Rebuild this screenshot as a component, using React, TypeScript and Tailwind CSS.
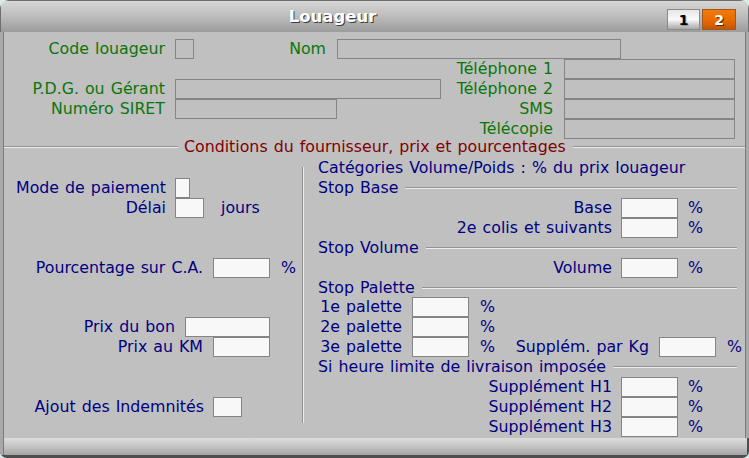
import type { ReactNode } from "react";

function Label({ className, children }: { className: string; children: ReactNode }) {
  return (
    <div className={`shrink-0 whitespace-nowrap text-right leading-none ${className}`}>
      {children}
    </div>
  );
}

function Field({ className }: { className: string }) {
  return <div className={`h-[20px] shrink-0 border border-[#858585] ${className}`} />;
}

function Input({ className }: { className: string }) {
  return <div className={`h-[20px] shrink-0 border border-[#858585] bg-[#f8f8f8] ${className}`} />;
}

function Row({ children, className = "" }: { children?: ReactNode; className?: string }) {
  return <div className={`flex h-[20px] items-center ${className}`}>{children}</div>;
}

function Heading({ children, className = "h-[20px]" }: { children: ReactNode; className?: string }) {
  return (
    <div className={`flex items-center pl-[14px] pr-[12px] ${className}`}>
      <span className="whitespace-nowrap leading-none">{children}</span>
      <div className="ml-[7px] h-0 flex-1 border-t border-b border-t-[#939393] border-b-[#ececec]" />
    </div>
  );
}

function PctRow({ label }: { label: string }) {
  return (
    <Row>
      <Label className="w-[308px]">{label}</Label>
      <Input className="ml-[9px] w-[57px]" />
      <span className="ml-[10px] leading-none">%</span>
    </Row>
  );
}

function PaletteRow({ label, children }: { label: string; children?: ReactNode }) {
  return (
    <Row>
      <Label className="w-[98px]">{label}</Label>
      <Input className="ml-[10px] w-[57px]" />
      <div className="w-[36px] shrink-0 pl-[11px] leading-none">%</div>
      {children}
    </Row>
  );
}

export default function App() {
  return (
    <div className="h-[458px] w-[749px] bg-[#d4ebe8] font-['DejaVu_Sans',Verdana,sans-serif] text-[15.8px] [word-spacing:1px]">
      <div className="flex h-full flex-col overflow-hidden rounded-t-[9px] rounded-b-[7px]">
        {/* title bar */}
        <div className="flex h-[32px] shrink-0 items-center bg-linear-to-b from-[#d8d8d8] via-[#bdbdbd] to-[#9c9c9c] shadow-[inset_0_1px_0_#6e6e6e,inset_1px_0_0_#6e6e6e,inset_-1px_0_0_#6e6e6e]">
          <div className="flex-1 pt-[3px] text-center text-[16.5px] font-bold text-white [text-shadow:1px_1px_0_#3c3c3c]">
            Louageur
          </div>
          <div className="flex w-[84px] shrink-0 gap-[2px] pl-[2px] pt-[7px]">
            <button
              type="button"
              className="flex h-[21px] w-[33px] items-center justify-center border border-[#8a8a8a] bg-linear-to-b from-[#e6e6e6] via-[#fafafa] to-[#a8a8a8] text-[14px] font-bold leading-none text-black [text-shadow:1px_1px_0_#9a9a9a]"
            >
              1
            </button>
            <button
              type="button"
              className="flex h-[21px] w-[34px] items-center justify-center border border-[#9a5a20] bg-linear-to-b from-[#f27a0a] via-[#e86c00] to-[#c85400] text-[14px] font-bold leading-none text-white [text-shadow:1px_1px_0_#5a2a00]"
            >
              2
            </button>
          </div>
        </div>

        {/* body */}
        <div className="h-[406px] shrink-0 bg-[#c0c0c0] shadow-[inset_3px_0_0_#a9a9a9,inset_4px_0_0_#7a7a7a,inset_-3px_0_0_#a9a9a9,inset_-4px_0_0_#7a7a7a]">
          <div className="pt-[7px] text-[#0a760a]">
            <Row>
              <Label className="w-[165px]">Code louageur</Label>
              <Field className="ml-[10px] w-[19px]" />
              <Label className="w-[132px]">Nom</Label>
              <Field className="ml-[11px] w-[284px]" />
            </Row>
            <Row>
              <Label className="w-[553px]">Téléphone 1</Label>
              <Field className="ml-[11px] w-[171px]" />
            </Row>
            <Row>
              <Label className="w-[165px]">P.D.G. ou Gérant</Label>
              <Field className="ml-[10px] w-[266px]" />
              <Label className="w-[112px]">Téléphone 2</Label>
              <Field className="ml-[11px] w-[171px]" />
            </Row>
            <Row>
              <Label className="w-[165px]">Numéro SIRET</Label>
              <Field className="ml-[10px] w-[162px]" />
              <Label className="w-[216px]">SMS</Label>
              <Field className="ml-[11px] w-[171px]" />
            </Row>
            <Row>
              <Label className="w-[553px]">Télécopie</Label>
              <Field className="ml-[11px] w-[171px]" />
            </Row>
          </div>

          {/* section separator */}
          <div className="flex h-[15px] items-center">
            <div className="ml-[4px] h-0 w-[174px] border-t border-b border-t-[#939393] border-b-[#ececec]" />
            <span className="ml-[6px] whitespace-nowrap leading-none text-[#800000]">
              Conditions du fournisseur, prix et pourcentages
            </span>
            <div className="ml-[7px] mr-[4px] h-0 flex-1 border-t border-b border-t-[#939393] border-b-[#ececec]" />
          </div>

          <div className="mt-[4px] flex text-[#000080]">
            {/* left column */}
            <div className="flex w-[302px] shrink-0 flex-col">
              <div className="h-[20px]" />
              <Row>
                <Label className="w-[166px]">Mode de paiement</Label>
                <Input className="ml-[9px] w-[15px]" />
              </Row>
              <Row>
                <Label className="w-[166px]">Délai</Label>
                <Input className="ml-[9px] w-[29px]" />
                <span className="ml-[17px] leading-none">jours</span>
              </Row>
              <div className="h-[40px]" />
              <Row>
                <Label className="w-[203px]">Pourcentage sur C.A.</Label>
                <Input className="ml-[10px] w-[57px]" />
                <span className="ml-[11px] leading-none">%</span>
              </Row>
              <div className="h-[39px]" />
              <Row>
                <Label className="w-[175px]">Prix du bon</Label>
                <Input className="ml-[10px] w-[85px]" />
              </Row>
              <Row>
                <Label className="w-[203px]">Prix au KM</Label>
                <Input className="ml-[10px] w-[57px]" />
              </Row>
              <div className="h-[40px]" />
              <Row>
                <Label className="w-[204px]">Ajout des Indemnités</Label>
                <Input className="ml-[9px] w-[29px]" />
              </Row>
            </div>

            {/* vertical groove */}
            <div className="mt-[9px] h-[256px] w-0 shrink-0 border-l border-r border-l-[#939393] border-r-[#ececec]" />

            {/* right column */}
            <div className="flex flex-1 flex-col">
              <Row className="pl-[14px]">
                <span className="whitespace-nowrap leading-none">
                  Catégories Volume/Poids : % du prix louageur
                </span>
              </Row>
              <Heading>Stop Base</Heading>
              <PctRow label="Base" />
              <PctRow label="2e colis et suivants" />
              <Heading>Stop Volume</Heading>
              <PctRow label="Volume" />
              <Heading className="h-[19px]">Stop Palette</Heading>
              <PaletteRow label="1e palette" />
              <PaletteRow label="2e palette" />
              <PaletteRow label="3e palette">
                <Label className="w-[144px]">Supplém. par Kg</Label>
                <Input className="ml-[10px] w-[57px]" />
                <span className="ml-[11px] leading-none">%</span>
              </PaletteRow>
              <Heading>Si heure limite de livraison imposée</Heading>
              <PctRow label="Supplément H1" />
              <PctRow label="Supplément H2" />
              <PctRow label="Supplément H3" />
            </div>
          </div>
        </div>

        {/* footer */}
        <div className="h-[20px] shrink-0 border-b-[3px] border-[#4e4e4e] bg-linear-to-b from-[#dcdcdc] via-[#c4c4c4] to-[#a4a4a4] shadow-[inset_3px_0_0_#a9a9a9,inset_4px_0_0_#7a7a7a,inset_-2px_0_0_#4e4e4e]" />
      </div>
    </div>
  );
}
